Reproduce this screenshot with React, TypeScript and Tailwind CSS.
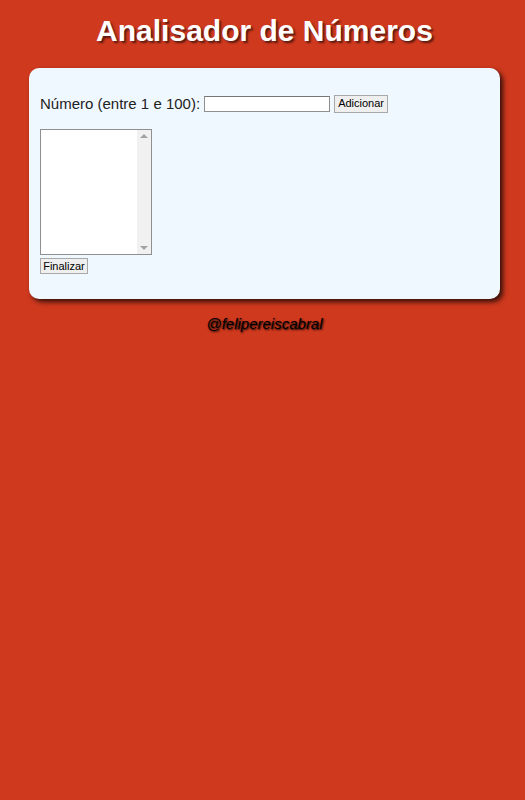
import React from 'react';

const App: React.FC = () => {
  return (
    <div className="min-h-[800px] bg-[#cf391e] pl-[4px] font-['Liberation_Sans',Arial,sans-serif] text-[15px] text-black">
      <header>
        <h1 className="text-center text-[30px] font-bold text-white pt-[13px] leading-[36px] [text-shadow:2px_2px_2px_#5a1a10]">
          Analisador de Números
        </h1>
      </header>

      <section className="mx-auto mt-[19px] w-[471px] rounded-[10px] bg-[#f0f8ff] px-[11px] py-[10px] shadow-[3px_3px_5px_rgba(0,0,0,0.75)]">
        <div className="mt-[16px] mb-[16px] flex items-center h-[19px] leading-[17px] text-[#222]">
          <span>Número (entre 1 e 100):</span>
          <div className="ml-[4px] h-[16px] w-[126px] border border-[#8f8f8f] border-t-[#767676] bg-white" />
          <button className="ml-[4px] h-[18px] w-[54px] border border-[#a8a8a8] bg-[#efefef] text-[11px] leading-[13px] text-black font-['Liberation_Sans',Arial,sans-serif]">
            Adicionar
          </button>
        </div>

        <div className="mt-[1px] flex h-[126px] w-[112px] border border-[#8f8f8f] bg-white">
          <div className="flex-1" />
          <div className="flex w-[14px] flex-col items-center justify-between bg-[#f1f1f1] py-[4px]">
            <div className="h-0 w-0 border-x-[4px] border-b-[4px] border-x-transparent border-b-[#a3a3a3]" />
            <div className="h-0 w-0 border-x-[4px] border-t-[4px] border-x-transparent border-t-[#a3a3a3]" />
          </div>
        </div>
        <button className="mt-[3px] mb-[15px] block h-[16px] w-[48px] border border-[#a8a8a8] bg-[#efefef] text-[11px] leading-[13px] text-black">
          Finalizar
        </button>
      </section>

      <footer className="mt-[16px] text-center">
        <p className="italic leading-[17px] text-black [text-shadow:1px_1px_2px_#000]">
          @felipereiscabral
        </p>
      </footer>
    </div>
  );
};

export default App;
